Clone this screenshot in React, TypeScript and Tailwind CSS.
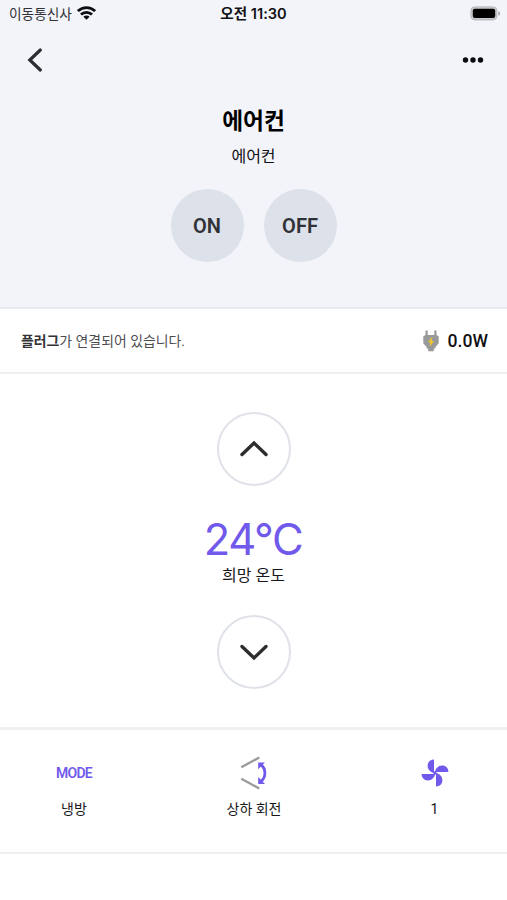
import type { ReactNode } from "react";

function WifiIcon() {
  return (
    <svg width="19" height="15" viewBox="0 0 19 15" className="text-[#0c0d10]">
      <g fill="none" stroke="currentColor" strokeWidth="2.8">
        <path d="M0.9 5.1C5.8 0.4 13.2 0.4 18.1 5.1" />
        <path d="M4 8.6C7.1 5.5 11.9 5.5 15 8.6" />
      </g>
      <path d="M6.4 10.8C8.2 9.2 10.8 9.2 12.6 10.8L9.5 13.8Z" fill="currentColor" />
    </svg>
  );
}

function BatteryIcon() {
  return (
    <svg width="31" height="15" viewBox="0 0 31 15">
      <rect x="0.9" y="0.9" width="26" height="13" rx="3.8" fill="#c9cacd" stroke="#b4b5b8" strokeWidth="1" />
      <rect x="2.8" y="2.8" width="22.4" height="9.3" rx="2" fill="#000" />
      <path d="M28.4 5.2C30.6 5.8 30.6 9.2 28.4 9.8Z" fill="#a5a6a8" />
    </svg>
  );
}

function PlugIcon() {
  return (
    <svg width="16" height="22" viewBox="0 0 16 22">
      <path
        d="M2.5 0.6H4.7V5H11.3V0.6H13.5V5L15.7 6.3V13.2L12.4 17V18.5H10.8V21.3H5.2V18.5H3.6V17L0.3 13.2V6.3L2.5 5Z"
        fill="#97999b"
      />
      <path d="M9.2 6.8L4.8 12.2H7.2L6.7 16.8L11.2 11H8.7Z" fill="#edc52f" />
    </svg>
  );
}

function SwingIcon() {
  return (
    <svg width="28" height="34" viewBox="0 0 28 34">
      <g stroke="#999a9d" strokeWidth="2.3" fill="none">
        <path d="M1.3 11.2L19.3 1.5" />
        <path d="M1.3 22.8L19.3 32.5" />
      </g>
      <path d="M21 9C26.2 12.5 26.2 21.5 21 25.3" fill="none" stroke="#7059eb" strokeWidth="2.8" />
      <path d="M18.2 6.4H25L18.2 13.2Z" fill="#7059eb" />
      <path d="M18.2 27.9H25L18.2 21.1Z" fill="#7059eb" />
    </svg>
  );
}

// one blade, repeated every quarter turn
const BLADE = "M13 0.6V12.6L14.8 14.6C9.6 13.8 6.6 10.8 6.6 6.8C6.6 3.2 9.2 0.6 13 0.6Z";

function FanIcon() {
  return (
    <svg width="28" height="28" viewBox="0 0 28 28" fill="#7059eb">
      <path d={BLADE} />
      <path d={BLADE} transform="rotate(90 14 14)" />
      <path d={BLADE} transform="rotate(180 14 14)" />
      <path d={BLADE} transform="rotate(270 14 14)" />
      <circle cx="14" cy="14" r="1.6" />
    </svg>
  );
}

function PowerButton({ label }: { label: string }) {
  return (
    <button className="size-[73px] rounded-full bg-[#dce1ea] font-['Roboto',sans-serif] text-[20px] font-semibold text-[#303237]">
      {label}
    </button>
  );
}

function StepButton({ label, d }: { label: string; d: string }) {
  return (
    <button
      aria-label={label}
      className="flex size-[74px] items-center justify-center rounded-full border-2 border-[#dfe2e8] bg-white"
    >
      <svg width="30" height="18" viewBox="0 0 30 18" fill="none" stroke="#2d2d2f" strokeWidth="3.4" strokeLinecap="round">
        <path d={d} />
      </svg>
    </button>
  );
}

function ControlItem({ label, children }: { label: string; children: ReactNode }) {
  return (
    <button className="flex flex-col items-center pt-[25px]">
      <span className="flex h-9 items-center justify-center">{children}</span>
      <span className="mt-2 text-[14px] leading-5 text-[#18181b]">{label}</span>
    </button>
  );
}

export default function App() {
  return (
    <div className="flex h-screen w-full flex-col overflow-hidden bg-white font-['Roboto','Noto_Sans_CJK_KR',sans-serif] text-[#111114]">
      <header className="h-[309px] shrink-0 border-b-2 border-[#e8e9ee] bg-[#f2f4f9]">
        <div className="grid h-[27px] grid-cols-3 items-center pr-[6px] pl-[9px]">
          <div className="flex items-center gap-[5px]">
            <span className="text-[13.7px] leading-5 text-[#303136]">이동통신사</span>
            <WifiIcon />
          </div>
          <span className="pr-[3px] text-center font-['Inter','Noto_Sans_CJK_KR',sans-serif] text-[14.6px] leading-5 font-semibold whitespace-nowrap">
            오전 11:30
          </span>
          <div className="flex justify-end">
            <BatteryIcon />
          </div>
        </div>

        <nav className="flex h-[65px] items-center justify-between pr-[23px] pl-[27px]">
          <button aria-label="뒤로">
            <svg width="16" height="24" viewBox="0 0 16 24" fill="none" stroke="#2d2d30" strokeWidth="3.2" strokeLinecap="round">
              <path d="M13.3 2L2.8 12L13.3 22" />
            </svg>
          </button>
          <button aria-label="더보기">
            <svg width="22" height="6" viewBox="0 0 22 6" fill="#0c0c0e">
              <circle cx="3.5" cy="3" r="2.7" />
              <circle cx="11" cy="3" r="2.7" />
              <circle cx="18.5" cy="3" r="2.7" />
            </svg>
          </button>
        </nav>

        <div className="flex flex-col items-center pt-[14px]">
          <h1 className="text-[22.7px] leading-8 font-bold text-black">에어컨</h1>
          <p className="mt-[7px] text-[16px] leading-6">에어컨</p>
          <div className="mt-[20px] flex gap-5">
            <PowerButton label="ON" />
            <PowerButton label="OFF" />
          </div>
        </div>
      </header>

      <section className="flex h-[65px] shrink-0 items-center justify-between border-b-2 border-[#eeeff2] pr-[19px] pl-[21px]">
        <p className="pt-px text-[13.9px] leading-5 text-[#4d4d50]">
          <b className="font-bold text-[#333337]">플러그</b>가 연결되어 있습니다.
        </p>
        <div className="flex items-center gap-[9px]">
          <PlugIcon />
          <span className="text-[17.6px] leading-6 font-medium">0.0W</span>
        </div>
      </section>

      <section className="flex h-[356px] shrink-0 flex-col items-center border-b-[3px] border-[#f0f0f2] pt-[38px]">
        <StepButton label="온도 올리기" d="M3 14.5L15 3L27 14.5" />
        <div className="mt-[27px] pr-px font-['Inter',sans-serif] text-[43.5px] leading-[52px] tracking-[-1.4px] text-[#7059eb]">
          24°C
        </div>
        <p className="-mt-px text-[16px] leading-6 text-[#18181b]">희망 온도</p>
        <div className="mt-[27px]">
          <StepButton label="온도 내리기" d="M3 3.5L15 15L27 3.5" />
        </div>
      </section>

      <section className="grid h-[124px] shrink-0 grid-cols-[148px_212px_149px] border-b-2 border-[#eeeff1]">
        <ControlItem label="냉방">
          <span className="text-[14px] font-semibold tracking-[-0.7px] text-[#7059eb]">MODE</span>
        </ControlItem>
        <ControlItem label="상하 회전">
          <SwingIcon />
        </ControlItem>
        <ControlItem label="1">
          <FanIcon />
        </ControlItem>
      </section>
    </div>
  );
}
